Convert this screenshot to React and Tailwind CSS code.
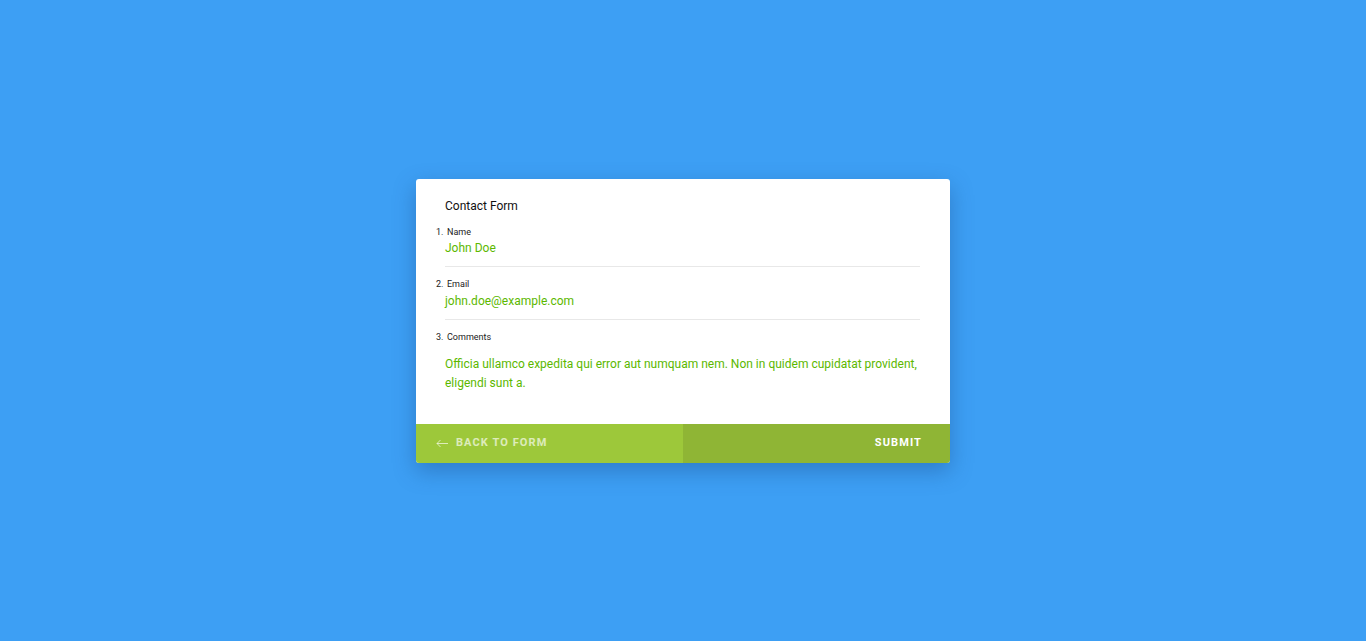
import React from 'react';

const fields = [
  { n: 1, label: 'Name', value: 'John Doe' },
  { n: 2, label: 'Email', value: 'john.doe@example.com' },
];

const App = () => {
  return (
    <div
      className="w-full h-[641px] bg-[#3d9ff4] flex items-center justify-center"
      style={{ fontFamily: 'Roboto, "Liberation Sans", sans-serif' }}
    >
      <div className="w-[534px] bg-white rounded-[3px] overflow-hidden shadow-[0_8px_22px_rgba(20,60,120,0.35)]">
        <div className="pl-[29px] pr-[30px] pt-[19px] pb-[31px]">
          <h1 className="text-[12px] leading-4 text-[#111]">Contact Form</h1>

          {fields.map((f, i) => (
            <div
              key={f.n}
              className={`border-b border-[#e8e8e8] pb-[10px] ${i === 0 ? 'mt-3' : 'mt-[11px]'}`}
            >
              <div className="relative text-[9px] leading-3 text-[#222] pl-[2px]">
                <span className="absolute left-[-9px]">{f.n}.</span>
                {f.label}
              </div>
              <div className={`${i === 0 ? 'mt-[2px]' : 'mt-[3px]'} text-[12px] leading-4 text-[#5cb800]`}>
                {f.value}
              </div>
            </div>
          ))}

          <div className="mt-[11px]">
            <div className="relative text-[9px] leading-3 text-[#222] pl-[2px]">
              <span className="absolute left-[-9px]">3.</span>
              Comments
            </div>
            <p className="mt-[12px] text-[12px] leading-[19px] text-[#5cb800]">
              Officia ullamco expedita qui error aut numquam nem. Non in quidem cupidatat provident, eligendi sunt a.
            </p>
          </div>
        </div>

        <div className="flex h-[39px]">
          <button className="w-1/2 bg-[#9dc83a] flex items-center gap-[8px] pl-[20px] text-[11px] font-bold tracking-[1.1px] text-white/65 uppercase">
            <svg width="12" height="9" viewBox="0 0 12 9" fill="none" stroke="currentColor" strokeWidth="1">
              <path d="M12 4.5H1M4.5 1L1 4.5 4.5 8" />
            </svg>
            Back to form
          </button>
          <button className="w-1/2 bg-[#8fb535] flex items-center justify-end pr-[28px] text-[11px] font-bold tracking-[1.1px] text-white uppercase">
            Submit
          </button>
        </div>
      </div>
    </div>
  );
};

export default App;
